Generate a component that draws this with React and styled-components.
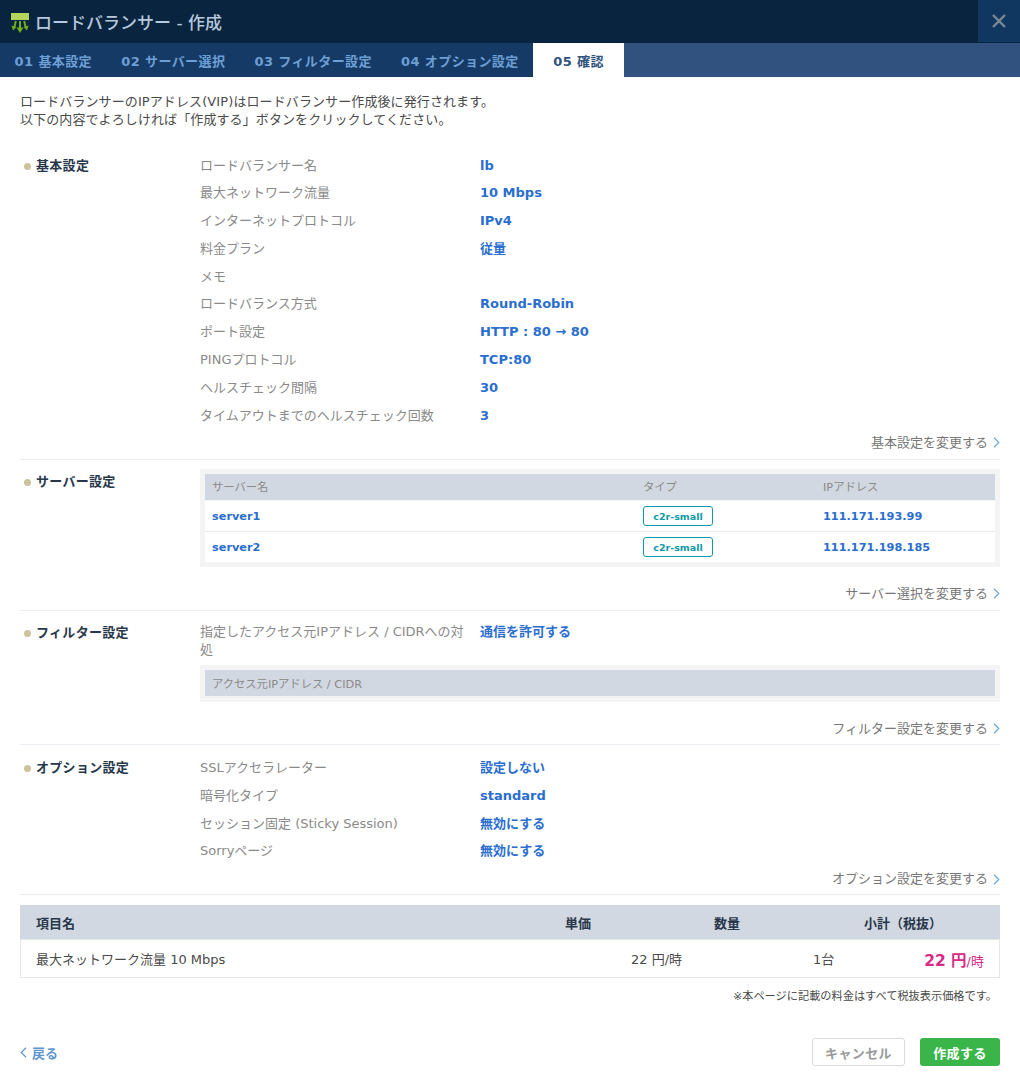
import React from "react";
import styled, { createGlobalStyle } from "styled-components";

const FONT = `"DejaVu Sans", "Noto Sans CJK JP", sans-serif`;

const Global = createGlobalStyle`
  html, body { margin: 0; padding: 0; background: #fff; }
  body { font-family: ${FONT}; font-size: 13px; color: #4a4a4a; }
  * { box-sizing: border-box; }
`;

const Modal = styled.div`width: 1020px; height: 1080px; display: flex; flex-direction: column; background: #fff; overflow: hidden;`;
const Header = styled.header`height: 43px; background: #09243f; display: flex; align-items: flex-start; justify-content: space-between;`;
const Title = styled.h1`margin: 0; height: 43px; padding-left: 11px; display: flex; align-items: center; gap: 6px; font-size: 17px; font-weight: 500; color: #b5c8dc;`;
const CloseButton = styled.button`width: 42px; height: 42px; border: 0; padding: 0; background: #10375f; display: flex; align-items: center; justify-content: center;`;
const Tabs = styled.nav`height: 34px; background: #31527f; display: flex;`;
const Tab = styled.div`
  height: 34px; display: flex; align-items: center; font-size: 13px; font-weight: 700; letter-spacing: .4px; white-space: nowrap;
  padding: 0 ${p => (p.$active ? "20px" : "14.6px")};
  background: ${p => (p.$active ? "#fff" : "#163a66")};
  color: ${p => (p.$active ? "#31527f" : "#6d9fd4")};
`;
const Body = styled.main`flex: 1; padding: 16px 20px 0; display: flex; flex-direction: column;`;
const Intro = styled.p`margin: 0 0 24px; font-size: 13px; line-height: 18px; letter-spacing: .1px; color: #4a4a4a;`;
const Section = styled.section`border-bottom: 1px solid #e9edf1; padding-bottom: ${p => p.$pb ?? 8}px; margin-bottom: ${p => p.$mb ?? 9}px;`;
const SectionBody = styled.div`display: grid; grid-template-columns: 180px 800px;`;
const SectionTitle = styled.h2`margin: ${p => p.$mt ?? 4}px 0 0; padding-left: 16px; font-size: 13px; line-height: 18px; font-weight: 700; letter-spacing: .3px; color: #29374b; position: relative; height: 18px;
  &::before { content: ""; position: absolute; left: 4px; top: 6px; width: 7px; height: 7px; border-radius: 50%; background: #cbc39b; }
`;
const Rows = styled.div`display: flex; flex-direction: column; padding-top: ${p => p.$pt ?? 3.5}px;`;
const Row = styled.div`display: grid; grid-template-columns: 280px 1fr; min-height: 27.8px; font-size: 13px; line-height: 18px;`;
const Label = styled.div`color: #8a8a8a; padding-right: 8px;`;
const Value = styled.div`color: #2a6ed0; font-weight: 700;`;
const ChangeLink = styled.a`display: flex; justify-content: flex-end; align-items: center; gap: 5px; font-size: 13px; line-height: 16px; color: #777; height: 16px; margin-top: ${p => p.$mt ?? 0.5}px;`;
const TableWrap = styled.div`background: #f4f4f4; padding: 5px; margin-top: ${p => p.$mt ?? 0}px;`;
const TableHead = styled.div`display: grid; grid-template-columns: 431px 180px 1fr; background: #d2d8e1; height: 26px; align-items: center; padding: ${p => (p.$plain ? "1px 0 0 7px" : "0 0 1px 7px")}; font-size: 11.3px; color: #8a8a8a; margin-bottom: 1px;`;
const TableRow = styled.div`display: grid; grid-template-columns: 431px 180px 1fr; background: #fff; height: 30px; align-items: center; padding: 1px 0 0 7px; font-size: 11.3px; font-weight: 700; color: #2a6ed0;
  & + & { border-top: 1px solid #e8eaee; height: 31px; }
`;
const Badge = styled.span`width: 70px; height: 20px; border: 1px solid #0f9aa8; border-radius: 3px; color: #0f9aa8; display: flex; align-items: center; justify-content: center; font-size: 9.5px; font-weight: 700;`;
const PriceTable = styled.div`border: 1px solid #e6e6e6; border-top: 0;`;
const PriceHead = styled.div`height: 34px; margin: 0 -1px; background: #d2d8e1; display: grid; grid-template-columns: 16px 492px 100px 198px 154px 1fr; align-items: center; font-size: 13px; font-weight: 700; color: #29374b;`;
const PriceRow = styled.div`height: 38px; border-top: 1px solid #e6e6e6; display: grid; grid-template-columns: 15px 595px 182px 40px 1fr; align-items: center; font-size: 13px; color: #4a4a4a; white-space: nowrap;`;
const Cell = styled.div`text-align: ${p => p.$a || "left"};`;
const Amount = styled.div`text-align: right; padding-right: 15px; color: #d92a86; font-size: 13px;`;
const Strong = styled.strong`font-size: 15.5px; font-weight: 700;`;
const Note = styled.p`margin: 12px 3px 0 0; text-align: right; font-size: 11.2px; line-height: 14px; color: #4a4a4a;`;
const Footer = styled.footer`margin-top: 34px; display: flex; justify-content: space-between; align-items: center;`;
const Back = styled.a`display: flex; align-items: center; gap: 5px; font-size: 13px; font-weight: 700; color: #6096d0;`;
const Actions = styled.div`display: flex; gap: 15px;`;
const Btn = styled.button`
  height: 28px; border-radius: 3px; font: 700 13px ${FONT}; letter-spacing: .4px; padding: 0;
  width: ${p => p.$w}px;
  border: ${p => (p.$primary ? "0" : "1px solid #ddd")};
  background: ${p => (p.$primary ? "#39b54a" : "#fff")};
  color: ${p => (p.$primary ? "#fff" : "#999")};
`;

const Chevron = ({ left, color = "#6ea6dc" }) => (
  <svg width="7" height="11" viewBox="0 0 7 11" fill="none" stroke={color} strokeWidth="1.2">
    <path d={left ? "M6 .8 1.2 5.5 6 10.2" : "M1 .8 5.8 5.5 1 10.2"} />
  </svg>
);
const LogoMark = styled.svg`margin-top: 3px;`;
const Logo = () => (
  <LogoMark width="18" height="20" viewBox="0 0 18 20">
    <rect x="0" y="0" width="18" height="7" fill="#b3d65a" />
    <g fill="none" stroke="#6fae1e" strokeWidth="2">
      <path d="M9 8v9M4.8 8 3.2 15M13.2 8l1.6 7" />
    </g>
    <g fill="#6fae1e">
      <path d="M5.5 14.5h7L9 20zM.4 12.5l5 1.5-3.4 3.6zM17.6 12.5l-5 1.5 3.4 3.6z" />
    </g>
  </LogoMark>
);
const Close = () => (
  <svg width="14" height="14" viewBox="0 0 14 14" stroke="#7d8791" strokeWidth="2.4"><path d="M1 1l12 12M13 1 1 13" /></svg>
);

const basic = [
  ["ロードバランサー名", "lb"], ["最大ネットワーク流量", "10 Mbps"], ["インターネットプロトコル", "IPv4"],
  ["料金プラン", "従量"], ["メモ", ""], ["ロードバランス方式", "Round-Robin"], ["ポート設定", "HTTP : 80 → 80"],
  ["PINGプロトコル", "TCP:80"], ["ヘルスチェック間隔", "30"], ["タイムアウトまでのヘルスチェック回数", "3"],
];
const options = [
  ["SSLアクセラレーター", "設定しない"], ["暗号化タイプ", "standard"],
  ["セッション固定 (Sticky Session)", "無効にする"], ["Sorryページ", "無効にする"],
];
const servers = [["server1", "111.171.193.99"], ["server2", "111.171.198.185"]];
const tabs = [["01 基本設定"], ["02 サーバー選択"], ["03 フィルター設定"], ["04 オプション設定"], ["05 確認", true]];

const KeyValues = ({ rows, pt }) => (
  <Rows $pt={pt}>{rows.map(([k, v]) => <Row key={k}><Label>{k}</Label><Value>{v}</Value></Row>)}</Rows>
);
const Change = ({ children, mt }) => <ChangeLink $mt={mt}>{children}<Chevron /></ChangeLink>;

export default function App() {
  return (
    <Modal>
      <Global />
      <Header>
        <Title><Logo />ロードバランサー - 作成</Title>
        <CloseButton aria-label="閉じる"><Close /></CloseButton>
      </Header>
      <Tabs>{tabs.map(([t, a]) => <Tab key={t} $active={a}>{t}</Tab>)}</Tabs>
      <Body>
        <Intro>ロードバランサーのIPアドレス(VIP)はロードバランサー作成後に発行されます。<br />以下の内容でよろしければ「作成する」ボタンをクリックしてください。</Intro>
        <Section>
          <SectionBody>
            <SectionTitle>基本設定</SectionTitle>
            <KeyValues rows={basic} />
          </SectionBody>
          <Change>基本設定を変更する</Change>
        </Section>
        <Section>
          <SectionBody>
            <SectionTitle>サーバー設定</SectionTitle>
            <TableWrap>
              <TableHead><div>サーバー名</div><div>タイプ</div><div>IPアドレス</div></TableHead>
              {servers.map(([n, ip]) => <TableRow key={n}><div>{n}</div><div><Badge>c2r-small</Badge></div><div>{ip}</div></TableRow>)}
            </TableWrap>
          </SectionBody>
          <Change mt={19}>サーバー選択を変更する</Change>
        </Section>
        <Section $mb={11} $pb={7}>
          <SectionBody>
            <SectionTitle>フィルター設定</SectionTitle>
            <div>
              <Rows $pt={3}>
                <Row><Label>指定したアクセス元IPアドレス / CIDRへの対処</Label><Value>通信を許可する</Value></Row>
              </Rows>
              <TableWrap $mt={6}><TableHead $plain>アクセス元IPアドレス / CIDR</TableHead></TableWrap>
            </div>
          </SectionBody>
          <Change mt={19}>フィルター設定を変更する</Change>
        </Section>
        <Section $mb={10} $pb={7}>
          <SectionBody>
            <SectionTitle $mt={3}>オプション設定</SectionTitle>
            <KeyValues rows={options} pt={3} />
          </SectionBody>
          <Change mt={1}>オプション設定を変更する</Change>
        </Section>
        <PriceTable>
          <PriceHead><span /><div>項目名</div><Cell $a="center">単価</Cell><Cell $a="center">数量</Cell><Cell $a="center">小計（税抜）</Cell></PriceHead>
          <PriceRow><span /><div>最大ネットワーク流量 10 Mbps</div><div>22 円/時</div><div>1台</div><Amount><Strong>22 円</Strong>/時</Amount></PriceRow>
        </PriceTable>
        <Note>※本ページに記載の料金はすべて税抜表示価格です。</Note>
        <Footer>
          <Back><Chevron left color="#6096d0" />戻る</Back>
          <Actions><Btn $w={93}>キャンセル</Btn><Btn $primary $w={80}>作成する</Btn></Actions>
        </Footer>
      </Body>
    </Modal>
  );
}
